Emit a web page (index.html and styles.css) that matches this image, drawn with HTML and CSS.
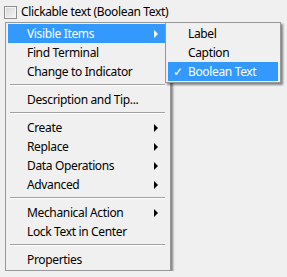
FILE: index.html
```html
<!DOCTYPE html>
<html lang="en">
<head>
    <meta charset="UTF-8">
    <meta name="viewport" content="width=device-width, initial-scale=1.0">
    <title>Clickable text context menu</title>
    <link rel="stylesheet" href="styles.css">
</head>
<body>
    <div class="control">
        <span class="checkbox"></span>
        <span class="control-label">Clickable text (Boolean Text)</span>
    </div>

    <div class="menu">
        <div class="item active has-sub">
            Visible Items
            <span class="arrow"></span>
            <div class="menu submenu">
                <div class="item">Label</div>
                <div class="item">Caption</div>
                <div class="item active"><span class="check">&#10003;</span>Boolean Text</div>
            </div>
        </div>
        <div class="item">Find Terminal</div>
        <div class="item">Change to Indicator</div>
        <div class="separator"></div>
        <div class="item">Description and Tip...</div>
        <div class="separator"></div>
        <div class="item">Create <span class="arrow"></span></div>
        <div class="item">Replace <span class="arrow"></span></div>
        <div class="item">Data Operations <span class="arrow"></span></div>
        <div class="item">Advanced <span class="arrow"></span></div>
        <div class="separator"></div>
        <div class="item">Mechanical Action <span class="arrow"></span></div>
        <div class="item">Lock Text in Center</div>
        <div class="separator"></div>
        <div class="item">Properties</div>
    </div>
</body>
</html>
```

FILE: styles.css
```css
body {
    margin: 0;
    background-color: #f0f0f0;
    font-family: "Noto Sans", "Open Sans", sans-serif;
    font-size: 12px;
    letter-spacing: -0.35px;
    color: #000;
}
.control {
    display: flex;
    align-items: center;
    height: 18px;
    padding: 3px 0 0 4px;
}
.checkbox {
    width: 11px;
    height: 11px;
    border: 1px solid #8f8f8f;
    background: linear-gradient(135deg, #d4d4d4, #f7f7f7);
    box-shadow: inset 0 0 0 1px #f4f4f4;
    margin-right: 4px;
}
.control-label {
    line-height: 16px;
}
.menu {
    position: relative;
    width: 160px;
    margin: 1px 0 0 5px;
    padding: 1px 2px 1px 2px;
    border: 1px solid #979797;
    background-color: #f0f0f0;
    box-shadow: 2px 2px 2px rgba(0, 0, 0, 0.45);
}
.item {
    position: relative;
    height: 19px;
    line-height: 19px;
    padding-left: 19px;
    white-space: nowrap;
}
.item.active {
    background-color: #3399ff;
    color: #fff;
}
.arrow {
    position: absolute;
    right: 10px;
    top: 6px;
    width: 0;
    height: 0;
    border-top: 4px solid transparent;
    border-bottom: 4px solid transparent;
    border-left: 4px solid #000;
}
.item.active .arrow {
    border-left-color: #fff;
}
.separator {
    height: 1px;
    margin: 3px 3px 4px 2px;
    border-top: 1px solid #a0a0a0;
    background-color: #fff;
}
.submenu {
    position: absolute;
    left: 157px;
    top: -2px;
    width: 110px;
    margin: 0;
    color: #000;
}
.submenu .item {
    padding-left: 20px;
    color: #000;
}
.submenu .item.active {
    color: #fff;
}
.check {
    position: absolute;
    left: 5px;
    top: 0;
}
```
